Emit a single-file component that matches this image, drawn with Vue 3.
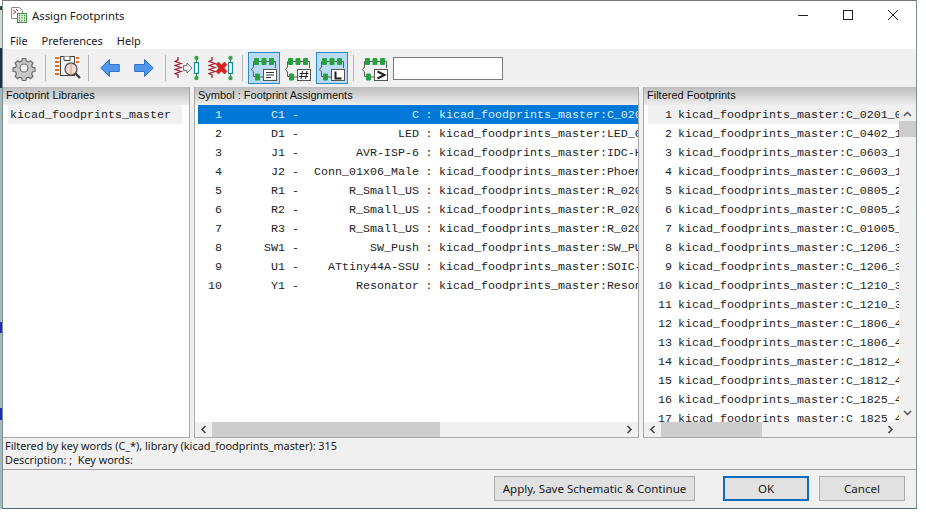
<script setup>
const libs = ['kicad_foodprints_master']
const symbols = [
  ['C1', 'C', 'C_0201_0603Metric'],
  ['D1', 'LED', 'LED_0201_0603Metric'],
  ['J1', 'AVR-ISP-6', 'IDC-Header_2x03'],
  ['J2', 'Conn_01x06_Male', 'PhoenixContact'],
  ['R1', 'R_Small_US', 'R_0201_0603Metric'],
  ['R2', 'R_Small_US', 'R_0201_0603Metric'],
  ['R3', 'R_Small_US', 'R_0201_0603Metric'],
  ['SW1', 'SW_Push', 'SW_PUSH_6mm'],
  ['U1', 'ATtiny44A-SSU', 'SOIC-14_3.9x8.7mm'],
  ['Y1', 'Resonator', 'Resonator_SMD']
]
const filtered = [
  'C_0201_0603Metric', 'C_0402_1005Metric', 'C_0603_1608Metric', 'C_0603_1608Metric',
  'C_0805_2012Metric', 'C_0805_2012Metric', 'C_01005_0402Metric', 'C_1206_3216Metric',
  'C_1206_3216Metric', 'C_1210_3225Metric', 'C_1210_3225Metric', 'C_1806_4516Metric',
  'C_1806_4516Metric', 'C_1812_4532Metric', 'C_1812_4532Metric', 'C_1825_4564Metric',
  'C_1825_4564Metric'
]
</script>

<template>
  <div class="desk-left"></div>
  <div class="desk-right"></div>
  <div class="window">
    <header class="titlebar">
      <svg class="appicon" width="16" height="16" viewBox="0 0 16 16">
        <path d="M.5.5h8l3 3v8h-11z" fill="#fff" stroke="#8a8a8a" />
        <path d="M2 3l3 2-3 2M5 2l2 2" fill="none" stroke="#c0392b" />
        <rect x="6.500" y="6.500" width="9" height="9" fill="#dff0d8" stroke="#4a8a4a" />
        <path d="M8 8.500h1M10.500 8.500h1M13 8.500h1M8 11h1M10.500 11h1M13 11h1M8 13.500h1M10.500 13.500h1M13 13.500h1" stroke="#2e8b3a" stroke-width="1.500" />
      </svg>
      <span class="title">Assign Footprints</span>
      <div class="winbtns">
        <svg width="12" height="12" viewBox="0 0 12 12"><path d="M1 6.500h10" stroke="#222" /></svg>
        <svg width="12" height="12" viewBox="0 0 12 12"><rect x="1.500" y="1.500" width="9" height="9" fill="none" stroke="#222" /></svg>
        <svg width="12" height="12" viewBox="0 0 12 12"><path d="M1 1l10 10M11 1L1 11" stroke="#222" /></svg>
      </div>
    </header>

    <nav class="menubar">
      <span>File</span><span>Preferences</span><span>Help</span>
    </nav>

    <div class="toolbar">
      <button class="tool">
        <svg width="26" height="26" viewBox="0 0 26 26">
          <path d="M11 2h4l.7 3 2.400 1 2.600-1.600 2.800 2.800-1.600 2.600 1 2.400 3 .7v4l-3 .7-1 2.400 1.600 2.600-2.800 2.800-2.600-1.600-2.400 1-.7 3h-4l-.7-3-2.400-1-2.600 1.600-2.800-2.800 1.600-2.600-1-2.400-3-.7v-4l3-.7 1-2.400-1.600-2.600 2.800-2.800 2.600 1.600 2.400-1z" transform="translate(2 2) scale(.85)" fill="#c8c8c8" stroke="#707070" stroke-width="1.500" />
          <circle cx="13" cy="13" r="4" fill="#f0f0f0" stroke="#707070" stroke-width="1.200" />
        </svg>
      </button>
      <i class="sep"></i>
      <button class="tool">
        <svg width="28" height="26" viewBox="0 0 28 26">
          <rect x="7.500" y="1.500" width="14" height="19" fill="#f6f6f6" stroke="#444" />
          <path d="M11 1.500v4h6v-4" fill="#fff" stroke="#444" />
          <path d="M2 3h4M2 7h4M2 11h4M2 15h4M2 19h4M23 3h3M23 7h3" stroke="#e07020" stroke-width="2.200" />
          <circle cx="18" cy="14" r="6" fill="#ecdcd4" stroke="#555" stroke-width="1.300" />
          <path d="M18 8v12" stroke="#d09a80" />
          <path d="M22.500 18.500l4.500 4.500" stroke="#333" stroke-width="2.200" />
        </svg>
      </button>
      <i class="sep"></i>
      <button class="tool">
        <svg width="20" height="20" viewBox="0 0 20 20"><path d="M.7 10L9.500 1.500v5h9.800v7H9.500v5z" fill="#4d96ea" stroke="#2f72c8" /></svg>
      </button>
      <button class="tool">
        <svg width="20" height="20" viewBox="0 0 20 20"><path d="M19.300 10L10.500 1.500v5H.7v7h9.800v5z" fill="#4d96ea" stroke="#2f72c8" /></svg>
      </button>
      <i class="sep"></i>
      <button class="tool">
        <svg width="26" height="26" viewBox="0 0 26 26">
          <path d="M4 2v3L1 6.500l6 2-6 2 6 2-6 2 6 2-6 2 3 1.500v3" fill="none" stroke="#a02030" stroke-width="1.300" />
          <path d="M9.500 10.500h3.500V8l5 5-5 5v-2.500H9.500z" fill="#eee" stroke="#777" />
          <path d="M22.500 3v20" stroke="#2a8a5a" />
          <rect x="20.500" y="7.500" width="4" height="11" fill="#e8f6fa" stroke="#1f8a9a" stroke-width="1.200" />
          <circle cx="22.500" cy="3" r="2.200" fill="#3fa34d" /><circle cx="22.500" cy="23" r="2.200" fill="#3fa34d" />
        </svg>
      </button>
      <button class="tool">
        <svg width="26" height="26" viewBox="0 0 26 26">
          <path d="M4 2v3L1 6.500l6 2-6 2 6 2-6 2 6 2-6 2 3 1.500v3" fill="none" stroke="#a02030" stroke-width="1.300" />
          <path d="M8 9.500l2.500-2.500 3 3 3-3L19 9.500l-3 3.500 3 3.500-2.500 2.500-3-3-3 3L8 16.500l3-3.500z" fill="#e01f1f" stroke="#a01010" stroke-width=".5" />
          <path d="M22.500 3v20" stroke="#2a8a5a" />
          <rect x="20.500" y="7.500" width="4" height="11" fill="#e8f6fa" stroke="#1f8a9a" stroke-width="1.200" />
          <circle cx="22.500" cy="3" r="2.200" fill="#3fa34d" /><circle cx="22.500" cy="23" r="2.200" fill="#3fa34d" />
        </svg>
      </button>
      <i class="sep"></i>
      <button class="tool box on">
        <svg width="28" height="27" viewBox="0 0 28 27">
          <path d="M3.500 12V6.500h22V13M3.500 12l-2 2.500 2 2.500v4.500H6" fill="none" stroke="#5c5c5c" />
          <rect x="4" y="3" width="5" height="7" rx="1" fill="#27a040" />
          <rect x="11.500" y="3" width="5" height="7" rx="1" fill="#27a040" />
          <rect x="19" y="3" width="5" height="7" rx="1" fill="#27a040" />
          <rect x="5" y="18.500" width="5" height="7" rx="1" fill="#27a040" />
          <path d="M10 22h4" stroke="#5c5c5c" />
          <rect x="13.500" y="14.500" width="13" height="11" fill="#fff" stroke="#555" />
          <path d="M16 17.500h8M16 20h8M16 22.500h5" stroke="#333" />
        </svg>
      </button>
      <button class="tool box">
        <svg width="28" height="27" viewBox="0 0 28 27">
          <path d="M3.500 12V6.500h22V13M3.500 12l-2 2.500 2 2.500v4.500H6" fill="none" stroke="#5c5c5c" />
          <rect x="4" y="3" width="5" height="7" rx="1" fill="#27a040" />
          <rect x="11.500" y="3" width="5" height="7" rx="1" fill="#27a040" />
          <rect x="19" y="3" width="5" height="7" rx="1" fill="#27a040" />
          <rect x="5" y="18.500" width="5" height="7" rx="1" fill="#27a040" />
          <path d="M10 22h4" stroke="#5c5c5c" />
          <rect x="13.500" y="14.500" width="13" height="11" fill="#fff" stroke="#555" />
          <path d="M18.500 16l-1.500 8M23 16l-1.500 8M15.500 18.500h9M15 21.500h9" stroke="#222" />
        </svg>
      </button>
      <button class="tool box on">
        <svg width="28" height="27" viewBox="0 0 28 27">
          <path d="M3.500 12V6.500h22V13M3.500 12l-2 2.500 2 2.500v4.500H6" fill="none" stroke="#5c5c5c" />
          <rect x="4" y="3" width="5" height="7" rx="1" fill="#27a040" />
          <rect x="11.500" y="3" width="5" height="7" rx="1" fill="#27a040" />
          <rect x="19" y="3" width="5" height="7" rx="1" fill="#27a040" />
          <rect x="5" y="18.500" width="5" height="7" rx="1" fill="#27a040" />
          <path d="M10 22h4" stroke="#5c5c5c" />
          <rect x="13.500" y="14.500" width="13" height="11" fill="#fff" stroke="#555" />
          <path d="M17.500 16.500v7h6" fill="none" stroke="#222" stroke-width="2" />
        </svg>
      </button>
      <i class="sep"></i>
      <button class="tool box">
        <svg width="28" height="27" viewBox="0 0 28 27">
          <path d="M3.500 12V6.500h22V13M3.500 12l-2 2.500 2 2.500v4.500H6" fill="none" stroke="#5c5c5c" />
          <rect x="4" y="3" width="5" height="7" rx="1" fill="#27a040" />
          <rect x="11.500" y="3" width="5" height="7" rx="1" fill="#27a040" />
          <rect x="19" y="3" width="5" height="7" rx="1" fill="#27a040" />
          <rect x="5" y="18.500" width="5" height="7" rx="1" fill="#27a040" />
          <path d="M10 22h4" stroke="#5c5c5c" />
          <rect x="13.500" y="14.500" width="13" height="11" fill="#fff" stroke="#555" />
          <path d="M16.500 16.500l7 3.500-7 3.500" fill="none" stroke="#222" stroke-width="2" />
        </svg>
      </button>
      <input class="filter" type="text" />
    </div>

    <main class="panels">
      <section class="panel libs">
        <h2>Footprint Libraries</h2>
        <div class="list">
          <div v-for="l in libs" :key="l" class="row soft"><span class="cell pad">{{ l }}</span></div>
        </div>
      </section>

      <section class="panel symbols">
        <h2>Symbol : Footprint Assignments</h2>
        <div class="list">
          <div v-for="(s, i) in symbols" :key="s[0]" class="row" :class="{ sel: i === 0 }">
            <span class="n">{{ i + 1 }}</span>
            <span class="ref">{{ s[0] }}</span>
            <span class="dash">-</span>
            <span class="val">{{ s[1] }}</span>
            <span class="colon">:</span>
            <span class="cell">kicad_foodprints_master:{{ s[2] }}</span>
          </div>
        </div>
        <div class="hbar">
          <svg class="chev" width="17" height="9" viewBox="0 0 17 9"><path d="M10.500 1L7 4.500 10.500 8" fill="none" stroke="#444" stroke-width="1.600" /></svg>
          <div class="track"><div class="thumb mid"></div></div>
          <svg class="chev" width="17" height="9" viewBox="0 0 17 9"><path d="M6.500 1L10 4.500 6.500 8" fill="none" stroke="#444" stroke-width="1.600" /></svg>
        </div>
      </section>

      <section class="panel filtered">
        <h2>Filtered Footprints</h2>
        <div class="body">
          <div class="list">
            <div v-for="(f, i) in filtered" :key="i" class="row" :class="{ soft: i === 0 }">
              <span class="fn">{{ i + 1 }}</span>
              <span class="cell">kicad_foodprints_master:{{ f }}</span>
            </div>
          </div>
          <div class="vbar">
            <svg width="9" height="6" viewBox="0 0 9 6"><path d="M1 5l3.500-3.500L8 5" fill="none" stroke="#555" stroke-width="1.500" /></svg>
            <div class="vtrack"><div class="vthumb"></div></div>
            <svg width="9" height="6" viewBox="0 0 9 6"><path d="M1 1l3.500 3.500L8 1" fill="none" stroke="#555" stroke-width="1.500" /></svg>
          </div>
        </div>
        <div class="hbar">
          <svg class="chev" width="17" height="9" viewBox="0 0 17 9"><path d="M10.500 1L7 4.500 10.500 8" fill="none" stroke="#444" stroke-width="1.600" /></svg>
          <div class="track"><div class="thumb right"></div></div>
          <svg class="chev" width="17" height="9" viewBox="0 0 17 9"><path d="M6.500 1L10 4.500 6.500 8" fill="none" stroke="#444" stroke-width="1.600" /></svg>
          <span class="corner"></span>
        </div>
      </section>
    </main>

    <div class="status">
      <div>Filtered by key words (C_*), library (kicad_foodprints_master): 315</div>
      <div>Description: ;&nbsp; Key words:</div>
    </div>

    <footer class="actions">
      <button class="btn apply">Apply, Save Schematic &amp; Continue</button>
      <button class="btn ok">OK</button>
      <button class="btn cancel">Cancel</button>
    </footer>
  </div>
</template>

<style>
html, body { background: #fff; margin: 0; }
</style>

<style scoped>
.desk-left {
  position: absolute;
  left: 0;
  top: 0;
  width: 3px;
  height: 509px;
  background: linear-gradient(#fff 0 6px, #2f4a38 6px 10px, #d8d8d8 10px 48px, #1b2f4d 48px 88px, #a4baba 88px 322px, #1a2fc0 322px 333px, #a4baba 333px 408px, #1a2fc0 408px 420px, #a4baba 420px 509px);
}
.desk-right {
  position: absolute;
  left: 916px;
  top: 45px;
  width: 1px;
  height: 42px;
  background: #1b2f4d;
}
.window {
  box-sizing: border-box;
  width: 915px;
  height: 509px;
  margin-left: 2px;
  border: 1px solid #7d8c8d;
  border-top-color: #777;
  border-bottom-color: #4f6a6c;
  background: #f0f0f0;
  display: flex;
  flex-direction: column;
  font-family: "Noto Sans", "Open Sans", sans-serif;
  font-size: 11px;
  color: #1a1a1a;
  overflow: hidden;
  position: relative;
}
.titlebar {
  height: 30px;
  background: #fff;
  display: flex;
  align-items: center;
  padding: 0 0 2px 8px;
  box-sizing: border-box;
  flex: none;
}
.appicon { margin-right: 5px; }
.title { font-size: 11.300px; }
.winbtns {
  margin-left: auto;
  display: flex;
  gap: 33px;
  padding-right: 17px;
}
.menubar {
  height: 18px;
  background: #fff;
  display: flex;
  gap: 14px;
  padding: 0 0 0 7px;
  box-sizing: border-box;
  align-items: center;
  flex: none;
}
.toolbar {
  height: 38px;
  display: flex;
  align-items: center;
  padding-left: 4px;
  flex: none;
}
.tool {
  border: 0;
  background: none;
  padding: 0;
  width: 34px;
  height: 32px;
  display: flex;
  align-items: center;
  justify-content: center;
  flex: none;
}
.tool.box {
  box-sizing: border-box;
  border: 1px solid transparent;
  width: 32px;
  margin: 0 1px;
}
.tool.box.on {
  border-color: #2a8ac8;
  background: #b8daf2;
}
.sep {
  width: 1px;
  height: 26px;
  background: #b5b5b5;
  margin: 0 4px;
  flex: none;
}
.filter {
  box-sizing: border-box;
  width: 110px;
  height: 23px;
  margin-left: 1px;
  border: 1px solid #7a7a7a;
  background: #fff;
  padding: 0;
}
.panels {
  height: 351px;
  display: flex;
  gap: 4px;
  flex: none;
}
.panel {
  display: flex;
  flex-direction: column;
  min-width: 0;
  border-right: 1px solid #a8a8a8;
  border-bottom: 1px solid #a8a8a8;
  background: #fff;
  overflow: hidden;
  box-sizing: border-box;
}
.panel.libs { width: 187px; }
.panel.symbols { width: 445px; border-left: 1px solid #a8a8a8; }
.panel.filtered { flex: 1; border-left: 1px solid #a8a8a8; border-right: 0; }
h2 {
  margin: 0;
  height: 18px;
  flex: none;
  font: 400 11px/16px "Liberation Sans", Arial, sans-serif;
  color: #111;
  padding-left: 3px;
  background: linear-gradient(#bdbdbd, #ededed);
}
.list {
  flex: 1;
  min-height: 0;
  min-width: 0;
  overflow: hidden;
  padding: 0 0 0 4px;
  font-family: "Liberation Mono", monospace;
  font-size: 11.670px;
  color: #222;
}
.libs .list { padding: 0 7px 0 5px; }
.symbols .list { padding-left: 3px; }
.row {
  height: 19px;
  line-height: 21px;
  display: flex;
  white-space: pre;
}
.cell { flex: 1; min-width: 0; overflow: hidden; }
.pad { padding-left: 2px; }
.soft { background: #f0f0f0; }
.sel { background: #0078d7; color: #dbeeff; }
.n { width: 24px; text-align: right; flex: none; }
.ref { width: 63px; text-align: right; flex: none; }
.dash { width: 21px; text-align: center; flex: none; }
.val { width: 113px; text-align: right; flex: none; }
.colon { width: 20px; text-align: center; flex: none; }
.body { flex: 1; min-height: 0; display: flex; }
.fn { width: 24px; text-align: right; margin-right: 6px; flex: none; }
.vbar {
  width: 17px;
  flex: none;
  background: #f0f0f0;
  display: flex;
  flex-direction: column;
  align-items: center;
  padding: 6px 0;
  box-sizing: border-box;
}
.vtrack { flex: 1; width: 100%; padding-top: 4px; }
.vthumb { height: 16px; width: 100%; background: #cdcdcd; }
.hbar {
  height: 15px;
  flex: none;
  display: flex;
  align-items: center;
  background: #f0f0f0;
}
.chev { flex: none; }
.track { flex: 1; height: 100%; }
.thumb { height: 100%; background: #cdcdcd; }
.thumb.mid { width: 228px; }
.thumb.right { width: 101px; }
.corner { width: 17px; flex: none; }
.status {
  height: 32px;
  flex: none;
  padding: 1px 0 0 2px;
  font-size: 10.860px;
  line-height: 14px;
  box-sizing: border-box;
  border-bottom: 1px solid #a0a0a0;
}
.actions {
  flex: 1;
  display: flex;
  align-items: flex-start;
  padding: 6px 11px 0 0;
  justify-content: flex-end;
}
.btn {
  box-sizing: border-box;
  height: 25px;
  border: 1px solid #adadad;
  background: #e1e1e1;
  font: 11.560px "Noto Sans", sans-serif;
  color: #1a1a1a;
  padding: 0;
}
.apply { width: 201px; margin-right: 28px; }
.ok { width: 86px; margin-right: 10px; border: 2px solid #0f6cbd; }
.cancel { width: 86px; }
</style>
